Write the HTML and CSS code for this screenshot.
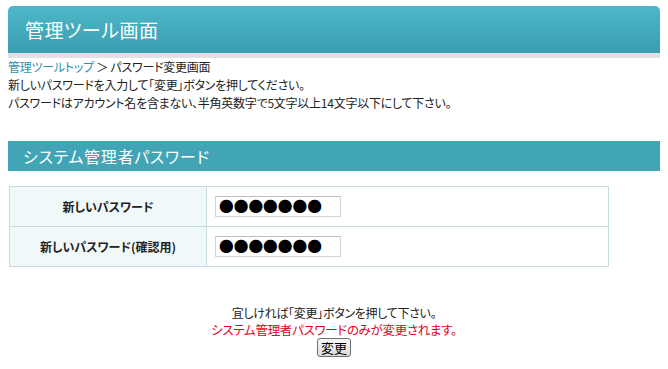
FILE: index.html
```html
<!DOCTYPE html>
<html lang="ja">
<head>
<meta charset="utf-8">
<title>管理ツール画面</title>
<link rel="stylesheet" href="styles.css">
</head>
<body>
<div class="page">
  <header class="top">
    <h1 class="top-title">管理ツール画面</h1>
  </header>
  <div class="intro">
    <p class="crumb"><a href="#" class="crumb-link">管理ツールトップ</a> ＞ パスワード変更画面</p>
    <p>新しいパスワードを入力して「変更」ボタンを押してください。</p>
    <p>パスワードはアカウント名を含まない、半角英数字で5文字以上14文字以下にして下さい。</p>
  </div>
  <h2 class="section">システム管理者パスワード</h2>
  <table class="form">
    <tr>
      <th>新しいパスワード</th>
      <td><span class="field">●●●●●●●</span></td>
    </tr>
    <tr>
      <th>新しいパスワード(確認用)</th>
      <td><span class="field">●●●●●●●</span></td>
    </tr>
  </table>
  <div class="confirm">
    <p>宜しければ「変更」ボタンを押して下さい。</p>
    <p class="warn">システム管理者パスワードのみが変更されます。</p>
    <button type="button" class="btn">変更</button>
  </div>
</div>
</body>
</html>
```
FILE: styles.css
```css
html, body {
  margin: 0;
  padding: 0;
  background: #ffffff;
}
body {
  font-family: "Noto Sans CJK JP", "DejaVu Sans", sans-serif;
  font-size: 12px;
  color: #222;
  font-feature-settings: "palt";
}
p { margin: 0; }
.page {
  padding: 6px 8px 0 8px;
}
.top {
  height: 47px;
  border-radius: 5px 5px 0 0;
  background: linear-gradient(#4db8c8, #3b9db0);
  border-bottom: 5px solid #e2e2e6;
  display: flex;
  align-items: center;
  padding-left: 17px;
}
.top-title {
  margin: 0;
  font-size: 19px;
  font-weight: normal;
  color: #ffffff;
  letter-spacing: 0.5px;
}
.intro {
  line-height: 18px;
  letter-spacing: -0.25px;
}
.crumb-link {
  color: #2f8fae;
  text-decoration: none;
}
.section {
  margin: 29px 0 0 0;
  height: 30px;
  background: #41a5b6;
  color: #fff;
  font-size: 16px;
  font-weight: normal;
  display: flex;
  align-items: center;
  padding-left: 15px;
  letter-spacing: 0.7px;
}
.form {
  margin: 15px 0 0 1px;
  width: 600px;
  border-collapse: collapse;
}
.form th, .form td {
  border: 1px solid #c6dcdf;
  height: 39px;
  padding: 0;
}
.form th {
  width: 196px;
  background: #f0f8fa;
  font-size: 12px;
  font-weight: bold;
  text-align: center;
}
.form td {
  padding-left: 8px;
}
.field {
  display: inline-flex;
  align-items: center;
  box-sizing: border-box;
  width: 126px;
  height: 21px;
  border: 1px solid #d4d4d4;
  border-top-color: #bdbdbd;
  padding-left: 3px;
  font-size: 14.7px;
  line-height: 1;
  color: #000;
  font-feature-settings: normal;
  vertical-align: middle;
}
.confirm {
  margin-top: 37px;
  text-align: center;
  line-height: 17px;
  letter-spacing: -0.3px;
}
.warn {
  color: #e0001e;
  font-size: 12.5px;
}
.btn {
  margin-top: 0;
  font-family: inherit;
  font-size: 13px;
  line-height: 15px;
  padding: 0 3px;
  height: 19px;
  border: 1px solid #707070;
  border-radius: 3px;
  background: linear-gradient(#f6f6f6, #dcdcdc);
  color: #000;
}
```
